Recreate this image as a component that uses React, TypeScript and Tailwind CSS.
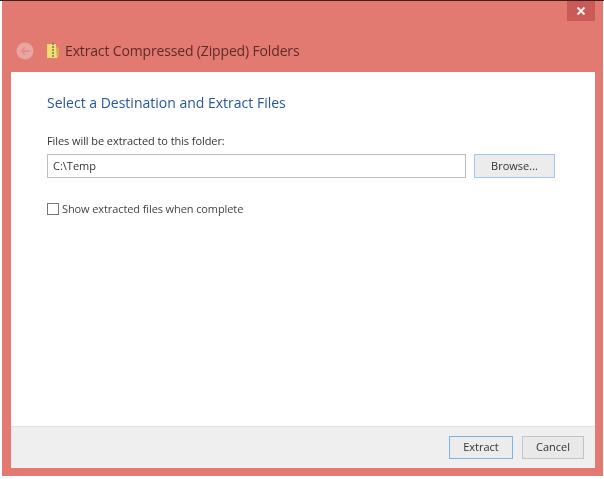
export default function App() {
  const font = { fontFamily: '"Open Sans", "Noto Sans", sans-serif' };
  return (
    <div className="w-[604px] h-[479px] bg-white overflow-hidden flex flex-col" style={font}>
      <div className="h-[1px] w-full bg-[#3a2020] shrink-0" />
      <div className="w-[601px] ml-[2px] h-[475px] bg-[#e37a72] flex flex-col pl-[9px] pr-[8px] pb-[8px] blur-[0.4px]">
        <div className="h-[71px] shrink-0 flex flex-col">
          <div className="h-[20px] shrink-0 flex justify-end">
            <div className="w-[28px] h-[20px] bg-[#c95a58] flex items-center justify-center">
              <svg width="10" height="10" viewBox="0 0 10 10"><path d="M1.5 1.5L8.5 8.5M8.5 1.5L1.5 8.5" stroke="#fdeeee" strokeWidth="2" /></svg>
            </div>
          </div>
          <div className="flex items-center mt-[20px] h-[20px]">
            <svg className="ml-[5px]" width="18" height="18" viewBox="0 0 18 18">
              <circle cx="9" cy="9" r="8.5" fill="#e9a5a1" />
              <path d="M13.5 9H6M9 5.5L5.5 9L9 12.5" stroke="#e58f8a" strokeWidth="2" fill="none" />
            </svg>
            <svg className="ml-[12px]" width="14" height="18" viewBox="0 0 14 18">
              <path d="M1 2h9l1 14H1z" fill="#f5dd72" />
              <path d="M11 5l2 1v9l-2 1z" fill="#d9a84a" />
              <path d="M7 1v15" stroke="#5f7f5a" strokeWidth="1.5" strokeDasharray="2 1" />
            </svg>
            <span className="ml-[5px] text-[14px] leading-[20px] text-[#5e2a2a] whitespace-nowrap tracking-[-0.15px]">Extract Compressed (Zipped) Folders</span>
          </div>
        </div>
        <div className="flex-1 flex flex-col bg-white min-h-0">
          <div className="flex-1 pl-[36px] pr-[40px] pt-[21px] flex flex-col items-start">
            <h1 className="text-[14px] leading-[20px] text-[#27569b] font-normal whitespace-nowrap">Select a Destination and Extract Files</h1>
            <p className="mt-[20px] text-[11px] leading-[16px] text-[#333] tracking-[-0.08px] whitespace-nowrap">Files will be extracted to this folder:</p>
            <div className="mt-[5px] flex w-full gap-[8px] h-[24px]">
              <div className="w-[419px] h-[24px] shrink-0 border border-[#bdbdbd] flex items-center pl-[5px] text-[11px] text-[#333]">C:\Temp</div>
              <button className="w-[81px] h-[24px] shrink-0 border border-[#9fc6ec] bg-[#ececec] text-[11px] text-[#333] flex items-center justify-center">Browse...</button>
            </div>
            <label className="mt-[23px] flex items-center">
              <span className="w-[12px] h-[12px] border border-[#777] bg-white" />
              <span className="ml-[3px] text-[11px] leading-[16px] text-[#444] whitespace-nowrap tracking-[-0.1px]">Show extracted files when complete</span>
            </label>
          </div>
          <div className="h-[42px] shrink-0 bg-[#efefef] border-t border-[#e2e2e2] flex items-center justify-end gap-[9px] pr-[11px]">
            <button className="w-[64px] h-[23px] border border-[#7db4e6] bg-[#ececec] text-[11px] text-[#333]">Extract</button>
            <button className="w-[62px] h-[23px] border border-[#c4c4c4] bg-[#e9e9e9] text-[11px] text-[#333]">Cancel</button>
          </div>
        </div>
      </div>
    </div>
  );
}
